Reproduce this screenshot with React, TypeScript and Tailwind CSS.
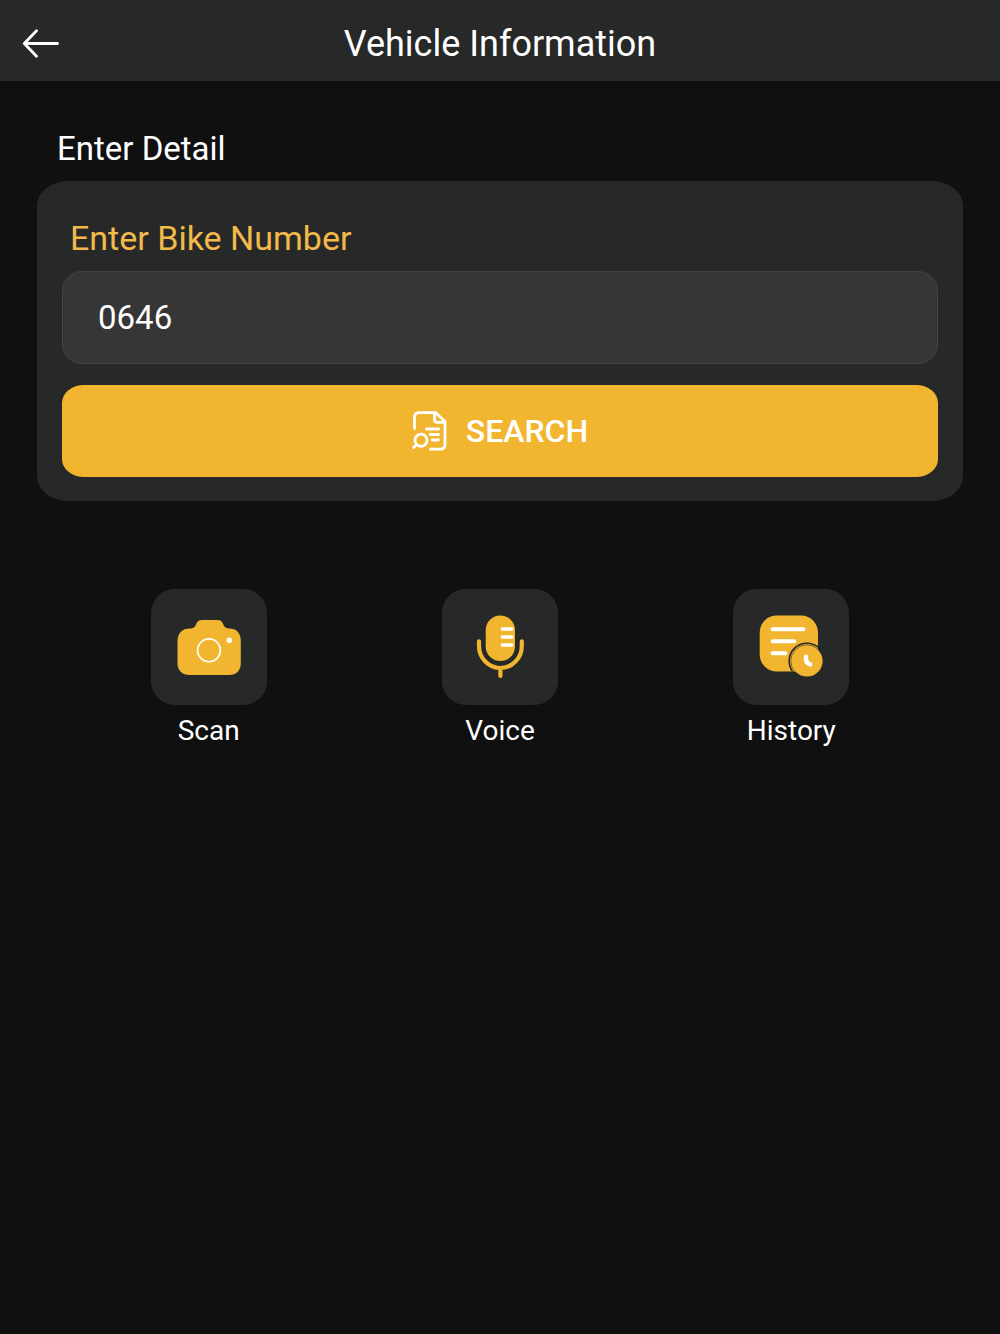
import React, { useState } from "react";

interface Action {
  label: string;
  icon: React.ReactNode;
}

const BackIcon = () => (
  <svg width="38" height="30" viewBox="0 0 38 30" fill="none" aria-hidden="true">
    <path
      d="M35.5 14.5H3M14.5 1.8L2.3 14.5L14.5 27.2"
      stroke="white"
      strokeWidth="2.8"
      strokeLinecap="round"
      strokeLinejoin="round"
    />
  </svg>
);

const SearchDocIcon = () => (
  <svg width="36" height="40" viewBox="0 0 36 40" fill="none" aria-hidden="true">
    <g stroke="white" strokeWidth="2.8" strokeLinecap="round" strokeLinejoin="round">
      <path d="M2.5 17.5V6.5C2.5 3.3 4 1.6 7 1.6H23.5L33 10.5V33.3C33 36.5 31.5 38.2 28.5 38.2H18.5" />
      <path d="M22.5 2V8.3C22.5 10.3 23.5 11.3 25.2 11.3H32.5" />
      <path d="M14.5 18H26.5M18.3 23.5H26.5M20.3 29H26.5" />
      <circle cx="9" cy="29.3" r="6.1" />
      <path d="M4.5 33.7L1.6 36.6" />
    </g>
  </svg>
);

const CameraIcon = () => (
  <svg width="116" height="116" viewBox="0 0 116 116" fill="none" aria-hidden="true">
    <path
      d="M26.5 53C26.5 44 31 39.5 39 39.5H40C43 39.5 44.3 37.5 45.3 34.8C46.3 32 48.5 31 51 31H66.5C69 31 71 32 72 34.8C73 37.5 74.3 39.5 77.3 39.5H78C85.5 39.5 89.8 44 89.8 52V74C89.8 81.5 85.5 86 78 86H39C31 86 26.5 81.5 26.5 74Z"
      fill="#f1b530"
    />
    <circle cx="58" cy="61.3" r="11.4" stroke="white" strokeWidth="1.6" />
    <circle cx="78.3" cy="51.3" r="2.8" fill="white" />
  </svg>
);

const MicIcon = () => (
  <svg width="116" height="116" viewBox="0 0 116 116" fill="none" aria-hidden="true">
    <rect x="43.7" y="26.5" width="29.3" height="45.5" rx="14.6" fill="#f1b530" />
    <path d="M60.3 40H69.8M60.3 48H69.8M60.3 56H69.8" stroke="white" strokeWidth="3.4" strokeLinecap="round" />
    <path
      d="M37 52.3V57A21.4 22 0 0 0 79.8 57V52.3M58.4 79V87"
      stroke="#f1b530"
      strokeWidth="4.2"
      strokeLinecap="round"
    />
  </svg>
);

const HistoryIcon = () => (
  <svg width="116" height="116" viewBox="0 0 116 116" fill="none" aria-hidden="true">
    <defs>
      <clipPath id="note">
        <rect x="26.7" y="26.5" width="58.3" height="56" rx="17" />
      </clipPath>
    </defs>
    <rect x="26.7" y="26.5" width="58.3" height="56" rx="17" fill="#f1b530" />
    <g clipPath="url(#note)" stroke="#272928">
      <circle cx="74" cy="72" r="17.8" strokeWidth="1.6" />
      <circle cx="74" cy="72" r="16" strokeWidth="0.7" />
    </g>
    <circle cx="74" cy="72" r="15.6" fill="#f1b530" />
    <path d="M39.6 40.3H70.4M39.6 52.3H61.3M39.6 64.2H52.3" stroke="white" strokeWidth="4" strokeLinecap="round" />
    <path d="M73 67.6V70C73 72.8 74.3 74.4 77.2 75.4" stroke="white" strokeWidth="4.4" strokeLinecap="round" />
  </svg>
);

const actions: Action[] = [
  { label: "Scan", icon: <CameraIcon /> },
  { label: "Voice", icon: <MicIcon /> },
  { label: "History", icon: <HistoryIcon /> },
];

const App: React.FC = () => {
  const [bikeNumber, setBikeNumber] = useState("0646");

  return (
    <div className="min-h-screen bg-[#101010] text-white font-[Roboto,sans-serif]">
      <header className="grid grid-cols-[1fr_auto_1fr] items-center h-[81px] pt-1.5 px-[22px] bg-[#272928]">
        <button type="button" aria-label="Back" className="justify-self-start">
          <BackIcon />
        </button>
        <h1 className="text-[36px] leading-10">Vehicle Information</h1>
      </header>

      <main className="px-[37px] pt-12">
        <h2 className="px-5 text-[33px] leading-10">Enter Detail</h2>

        <form
          onSubmit={(e) => e.preventDefault()}
          className="mt-3 px-[25px] pt-[35px] pb-6 bg-[#272928] rounded-[31px/25px]"
        >
          <label htmlFor="bike-number" className="block px-2 text-[34px] leading-11 text-[#f3b94a]">
            Enter Bike Number
          </label>
          <input
            id="bike-number"
            type="text"
            value={bikeNumber}
            onChange={(e) => setBikeNumber(e.target.value)}
            className="block w-full h-[93px] mt-[11px] px-[35px] text-[33px] bg-[#363636] border border-[#444444] rounded-[20px] outline-none"
          />
          <button
            type="submit"
            className="flex items-center justify-center gap-[18px] w-full h-[92px] mt-[21px] bg-[#f1b530] rounded-[22px/18px] text-[32px] font-medium"
          >
            <SearchDocIcon />
            SEARCH
          </button>
        </form>

        <div className="grid grid-cols-3 mt-[88px] px-[26px]">
          {actions.map((action) => (
            <button key={action.label} type="button" className="flex flex-col items-center gap-2">
              <span className="bg-[#272928] rounded-3xl">{action.icon}</span>
              <span className="text-[28px] leading-9">{action.label}</span>
            </button>
          ))}
        </div>
      </main>
    </div>
  );
};

export default App;
